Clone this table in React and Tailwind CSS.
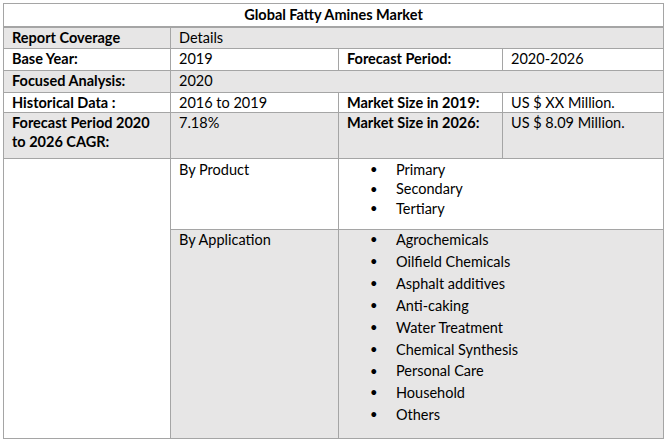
const font = { fontFamily: 'Lato, "Open Sans", sans-serif' };

const products = ['Primary', 'Secondary', 'Tertiary'];
const applications = [
  'Agrochemicals',
  'Oilfield Chemicals',
  'Asphalt additives',
  'Anti-caking',
  'Water Treatment',
  'Chemical Synthesis',
  'Personal Care',
  'Household',
  'Others',
];

function BulletList({ items, rowClass, className = '' }) {
  return (
    <ul className={`pl-[23px] ${className}`}>
      {items.map((item) => (
        <li key={item} className={`flex items-center ${rowClass}`}>
          <span className="w-[26px] text-[13px]">•</span>
          <span>{item}</span>
        </li>
      ))}
    </ul>
  );
}

const cell = 'border border-[#a5a5a5] px-[8px] align-top';

export default function App() {
  return (
    <div className="w-[668px] h-[448px] bg-white p-[3px] text-[14.5px] text-black" style={font}>
      <table className="table-fixed border-collapse w-[660px]">
        <colgroup>
          <col className="w-[167px]" />
          <col className="w-[168px]" />
          <col className="w-[164px]" />
          <col className="w-[161px]" />
        </colgroup>
        <tbody>
          <tr className="h-[23px]">
            <td colSpan={4} className="border border-[#a5a5a5] border-b-2 text-center font-bold leading-[20px]">
              Global Fatty Amines Market
            </td>
          </tr>
          <tr className="h-[22px] bg-[#e7e6e6] leading-[20px]">
            <td className={`${cell} font-bold`}>Report Coverage</td>
            <td colSpan={3} className={cell}>Details</td>
          </tr>
          <tr className="h-[22px] leading-[20px]">
            <td className={`${cell} font-bold`}>Base Year:</td>
            <td className={cell}>2019</td>
            <td className={`${cell} font-bold`}>Forecast Period:</td>
            <td className={cell}>2020-2026</td>
          </tr>
          <tr className="h-[22px] bg-[#e7e6e6] leading-[20px]">
            <td className={`${cell} font-bold`}>Focused Analysis:</td>
            <td colSpan={3} className={cell}>2020</td>
          </tr>
          <tr className="h-[20px] leading-[19px]">
            <td className={`${cell} font-bold`}>Historical Data :</td>
            <td className={cell}>2016 to 2019</td>
            <td className={`${cell} font-bold`}>Market Size in 2019:</td>
            <td className={cell}>US $ XX Million.</td>
          </tr>
          <tr className="h-[46px] bg-[#e7e6e6] leading-[19px]">
            <td className={`${cell} font-bold`}>
              Forecast Period 2020
              <br />
              to 2026 CAGR:
            </td>
            <td className={cell}>7.18%</td>
            <td className={`${cell} font-bold`}>Market Size in 2026:</td>
            <td className={cell}>US $ 8.09 Million.</td>
          </tr>
          <tr className="h-[71px]">
            <td rowSpan={2} className={cell}></td>
            <td className={`${cell} leading-[20px] pt-[1px]`}>By Product</td>
            <td colSpan={2} className={`${cell} pt-[1px]`}>
              <BulletList items={products} rowClass="h-[19.5px]" />
            </td>
          </tr>
          <tr className="h-[209px] bg-[#e7e6e6]">
            <td className={`${cell} leading-[20px] pt-0`}>By Application</td>
            <td colSpan={2} className={`${cell} pt-0`}>
              <BulletList items={applications} rowClass="h-[21.9px]" className="-mt-[1px]" />
            </td>
          </tr>
        </tbody>
      </table>
    </div>
  );
}
